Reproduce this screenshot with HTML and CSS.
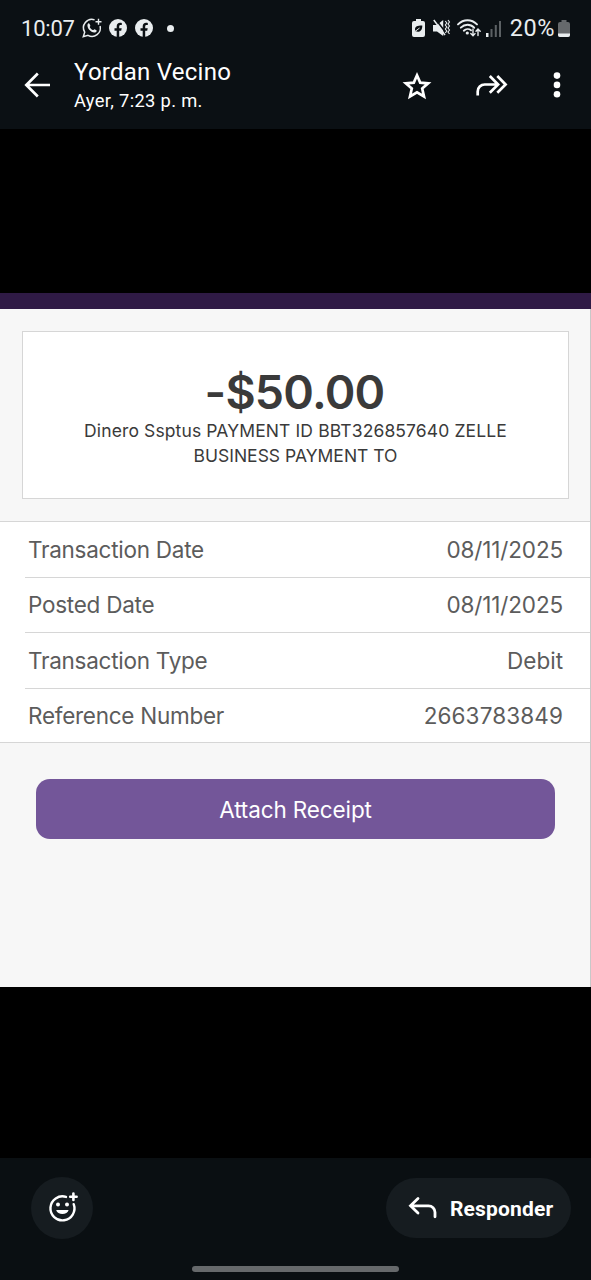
FILE: index.html
```html
<!DOCTYPE html>
<html lang="es">
<head>
<meta charset="utf-8">
<title>Yordan Vecino</title>
<link rel="stylesheet" href="styles.css">
</head>
<body>
<div class="screen">
  <header class="top">
    <div class="status">
      <div class="status-left">
        <span class="clock">10:07</span>
        <svg class="i-wa" width="20" height="20" viewBox="0 0 20 20" fill="none" stroke="#e9edef" stroke-width="1.5"><path d="M12.6 1.9A8.4 8.4 0 0 0 2.700 14.200L1.300 18.700L6 17.400A8.400 8.400 0 0 0 18.100 8"/><path d="M16.500 .8v6M13.500 3.800h6" stroke-width="1.400"/><path d="M5.600 6.200c.7-1.300 1.700-1 2-.2l.7 1.600c.2.600-.7 1.200-.5 1.600.8 1.400 1.800 2.300 3.200 2.900.5.200 1-1 1.600-.8l1.800.9c.5.300.3 1.500-.7 2-3.600 1.600-9.400-4-8.100-8z" fill="#e9edef" stroke="none"/></svg>
        <svg class="i-fb" width="18" height="18" viewBox="0 0 18 18"><circle cx="9" cy="9" r="9" fill="#e9edef"/><path d="M7.700 18v-6.200H5.500V9.200h2.200V7.500c0-2.600 1.300-3.800 3.400-3.800.7 0 1.300.1 1.700.2v2.200h-1.100c-1.200 0-1.500.6-1.500 1.500v1.600h2.500l-.5 2.600h-2V18z" fill="#0b1014"/></svg>
        <svg class="i-fb" width="18" height="18" viewBox="0 0 18 18"><circle cx="9" cy="9" r="9" fill="#e9edef"/><path d="M7.700 18v-6.200H5.500V9.200h2.200V7.500c0-2.600 1.300-3.800 3.400-3.800.7 0 1.300.1 1.700.2v2.200h-1.100c-1.200 0-1.500.6-1.500 1.500v1.600h2.500l-.5 2.600h-2V18z" fill="#0b1014"/></svg>
        <span class="dot"></span>
      </div>
      <div class="status-right">
        <svg width="13" height="18" viewBox="0 0 13 18"><path d="M4 0h5v2h2a2 2 0 0 1 2 2v12a2 2 0 0 1-2 2H2a2 2 0 0 1-2-2V4a2 2 0 0 1 2-2h2z" fill="#e9edef"/><path d="M10.300 6.500C6 6.400 3 7.200 3 10.400c0 .7.200 1.200.5 1.700L2.500 13.300M3.500 12.100c3 1.800 7 .2 6.800-5.600z" fill="#0b1014"/><path d="M2.800 12.600L7.600 9" stroke="#e9edef" stroke-width="1"/></svg>
        <svg class="i-mute" width="17" height="18" viewBox="0 0 17 18"><path d="M0 6h4l6.200-5v16L4 12.500H0z" fill="#e9edef"/><path d="M2 -.5L13.500 14.500" stroke="#0b1014" stroke-width="1.600"/><path d="M.8 1L12 16" stroke="#e9edef" stroke-width="1.500"/><path d="M12.300 2l1.500 2-1.500 2 1.500 2-1.500 2 1.500 2-1.500 2M15 1l1.500 2L15 5l1.500 2L15 9l1.500 2-1.500 2 1.500 2" fill="none" stroke="#e9edef" stroke-width="1.100"/></svg>
        <svg class="i-wifi" width="25" height="18" viewBox="0 0 25 18" fill="none" stroke="#e9edef" stroke-width="1.900" stroke-linecap="round"><path d="M1 5.400C6.500-.2 14.500-.2 20 5.400M3.800 8.700c4-4 9.500-4 13.400 0M6.800 11.700c2.100-2 5.200-2.100 7.200-.4"/><circle cx="10.300" cy="14" r="1.600" fill="#e9edef" stroke="none"/><path d="M16 10v6.500M13.800 14.500l2.200 2.300 2-2.200M21 16.500v-6M19 12.300l2-2.300 2.200 2.300" stroke-width="1.400"/></svg>
        <svg class="i-signal" width="16" height="17" viewBox="0 0 16 17"><path d="M0 13h2.500v4H0z" fill="#e9edef"/><path d="M4.500 9h2v8h-2zM8.800 5h2v12h-2zM13 1h2v16h-2z" fill="#5c6164"/></svg>
        <span class="percent">20%</span>
        <svg width="12" height="17" viewBox="0 0 12 17"><path d="M3.500 0h5v2H10a2 2 0 0 1 2 2v11a2 2 0 0 1-2 2H2a2 2 0 0 1-2-2V4a2 2 0 0 1 2-2h1.500z" fill="#66696c"/><path d="M0 13.500h12V15a2 2 0 0 1-2 2H2a2 2 0 0 1-2-2z" fill="#e9edef"/></svg>
      </div>
    </div>
    <div class="bar">
      <svg class="i-back" width="26" height="26" viewBox="0 0 26 26" fill="none" stroke="#fff" stroke-width="2.700"><path d="M26 13H2.500M13.800 1.500L2.300 13l11.500 11.500"/></svg>
      <div class="who">
        <div class="name">Yordan Vecino</div>
        <div class="when">Ayer, 7:23 p. m.</div>
      </div>
      <div class="actions">
        <svg width="28" height="28" viewBox="0 0 28 28" fill="none" stroke="#fff" stroke-width="2.700"><path d="M14 3.300l3.200 7.300 8 .7-6 5.300 1.800 7.800-7-4.100-7 4.100 1.800-7.800-6-5.300 8-.7z"/></svg>
        <svg class="i-forward" width="32" height="24" viewBox="0 0 32 24" fill="none" stroke="#fff" stroke-width="2.700"><path d="M1.700 22.500V18.500a7 7 0 0 1 7-7H22M13.800 3l8.300 8.500-8.300 8.300M21.300 3l8.300 8.500-8.300 8.300"/></svg>
        <svg class="i-more" width="8" height="26" viewBox="0 0 8 26" fill="#fff"><circle cx="4" cy="3.600" r="3.300"/><circle cx="4" cy="12.900" r="3.300"/><circle cx="4" cy="22.200" r="3.300"/></svg>
      </div>
    </div>
  </header>

  <main class="viewer">
    <section class="photo">
      <div class="band"></div>
      <div class="card">
        <div class="amount">-$50.00</div>
        <div class="desc"><span class="desc-a">Dinero Ssptus PAYMENT ID BBT326857640 ZELLE</span><br><span class="desc-b">BUSINESS PAYMENT TO</span></div>
      </div>
      <div class="list">
        <div class="row"><span class="label">Transaction Date</span><span class="date">08/11/2025</span></div>
        <div class="row"><span class="label">Posted Date</span><span class="date">08/11/2025</span></div>
        <div class="row"><span class="label">Transaction Type</span><span class="debit">Debit</span></div>
        <div class="row"><span class="label">Reference Number</span><span class="ref">2663783849</span></div>
      </div>
      <div class="attach"><span>Attach Receipt</span></div>
    </section>
  </main>

  <footer class="bottom">
    <div class="tools">
      <div class="react">
        <svg width="30" height="30" viewBox="0 0 30 30" fill="none" stroke="#fff" stroke-width="2.400"><path d="M19 3.900A12 12 0 1 0 26.700 11.200" stroke-linecap="round"/><circle cx="11" cy="11.500" r="2" fill="#fff" stroke="none"/><circle cx="20" cy="11.500" r="2" fill="#fff" stroke="none"/><path d="M9.200 17h12.400c-1 5.400-11.400 5.400-12.400 0z" fill="#fff" stroke="none"/><path d="M26.400 .6v6.400M23.200 3.800h6.400" stroke-width="2.600" stroke-linecap="round"/></svg>
      </div>
      <div class="reply">
        <svg width="28" height="22" viewBox="0 0 28 22" fill="none" stroke="#fff" stroke-width="2.800" stroke-linecap="round"><path d="M10 1.500L2.500 8.800l7.500 7.300M3 8.800H20.500a6.500 6.500 0 0 1 6.500 6.500V19.800"/></svg>
        <span>Responder</span>
      </div>
    </div>
    <div class="handle"></div>
  </footer>
</div>
</body>
</html>
```
FILE: styles.css
```css
* { box-sizing: border-box; }
body { margin: 0; background: #000; font-family: Roboto, "Liberation Sans", sans-serif; }
svg { display: block; flex: none; overflow: visible; }
span { white-space: nowrap; }
.screen { width: 591px; height: 1280px; display: flex; flex-direction: column; overflow: hidden; }
.top { height: 129px; background: #0b1014; color: #fff; }
.status { height: 56px; display: flex; justify-content: space-between; padding: 0 21px 0 21px; color: #e9edef; }
.status-left, .status-right { display: flex; align-items: center; }
.clock { font-size: 22px; width: 61px; letter-spacing: -.2px; }
.i-wa { margin-right: 7px; }
.i-fb { margin-right: 8px; }
.dot { width: 7px; height: 7px; border-radius: 50%; background: #e9edef; margin-left: 6px; }
.i-mute { margin-left: 8px; }
.i-wifi { margin-left: 7px; }
.i-signal { margin-left: 4px; }
.percent { font-size: 23.500px; letter-spacing: .5px; margin: 0 3px 0 8px; }
.bar { height: 58px; display: flex; align-items: center; padding-left: 24px; }
.who { margin-left: 24px; width: 329px; }
.name { font-size: 24px; line-height: 30px; letter-spacing: .25px; }
.when { font-size: 18.300px; line-height: 27px; letter-spacing: .35px; }
.actions { display: flex; align-items: center; padding-top: 2px; }
.i-forward { margin-left: 45px; margin-bottom: 3px; }
.i-more { margin-left: 45px; margin-bottom: 2px; }

.viewer { height: 1029px; padding-top: 164px; background: #000; }
.photo { height: 694px; background: #f7f7f7; border-right: 1px solid #c8c8c8; font-family: Inter, "Liberation Sans", sans-serif; }
.band { height: 16px; width: 591px; background: #2f1a45; }
.card { margin: 22px 22px 22px; width: 547px; height: 168px; background: #fff; border: 1px solid #d6d6d6; padding-top: 33px; text-align: center; color: #3a3a3a; }
.amount { font-size: 46.500px; font-weight: 600; line-height: 54px; letter-spacing: -.8px; margin: 0 0 -1px -2px; }
.desc { font-size: 17.500px; line-height: 25px; }
.desc-a { letter-spacing: .12px; }
.list { border-top: 1px solid #d6d6d6; border-bottom: 1px solid #d6d6d6; background: #fff; padding-left: 25px; height: 222px; }
.row { height: 55.500px; display: flex; justify-content: space-between; align-items: center; padding: 0 27px 0 3px; font-size: 22.500px; color: #5c5c5c; border-bottom: 1px solid #d6d6d6; }
.row:last-child { border-bottom: 0; padding-bottom: 2px; }
.label { letter-spacing: -.26px; }
.date { letter-spacing: -.15px; }
.ref { letter-spacing: .12px; }
.attach { margin: 36px 0 0 36px; width: 519px; height: 60px; border-radius: 14px; background: #735699; color: #fff; font-size: 22.500px; letter-spacing: -.12px; display: flex; align-items: center; justify-content: center; }

.bottom { height: 122px; background: #0a0f12; color: #fff; }
.tools { height: 108px; padding: 19px 20px 0 31px; display: flex; justify-content: space-between; }
.react { width: 62px; height: 62px; border-radius: 50%; background: #161c20; display: flex; align-items: center; justify-content: center; }
.reply { width: 185px; height: 60px; margin-top: 1px; border-radius: 30px; background: #161c20; display: flex; align-items: center; padding-left: 22px; font-size: 21px; font-weight: 700; letter-spacing: .15px; }
.reply span { margin-left: 14px; padding-top: 1px; }
.handle { width: 207px; height: 6px; border-radius: 3px; background: #66696b; margin-left: 192px; }
```
